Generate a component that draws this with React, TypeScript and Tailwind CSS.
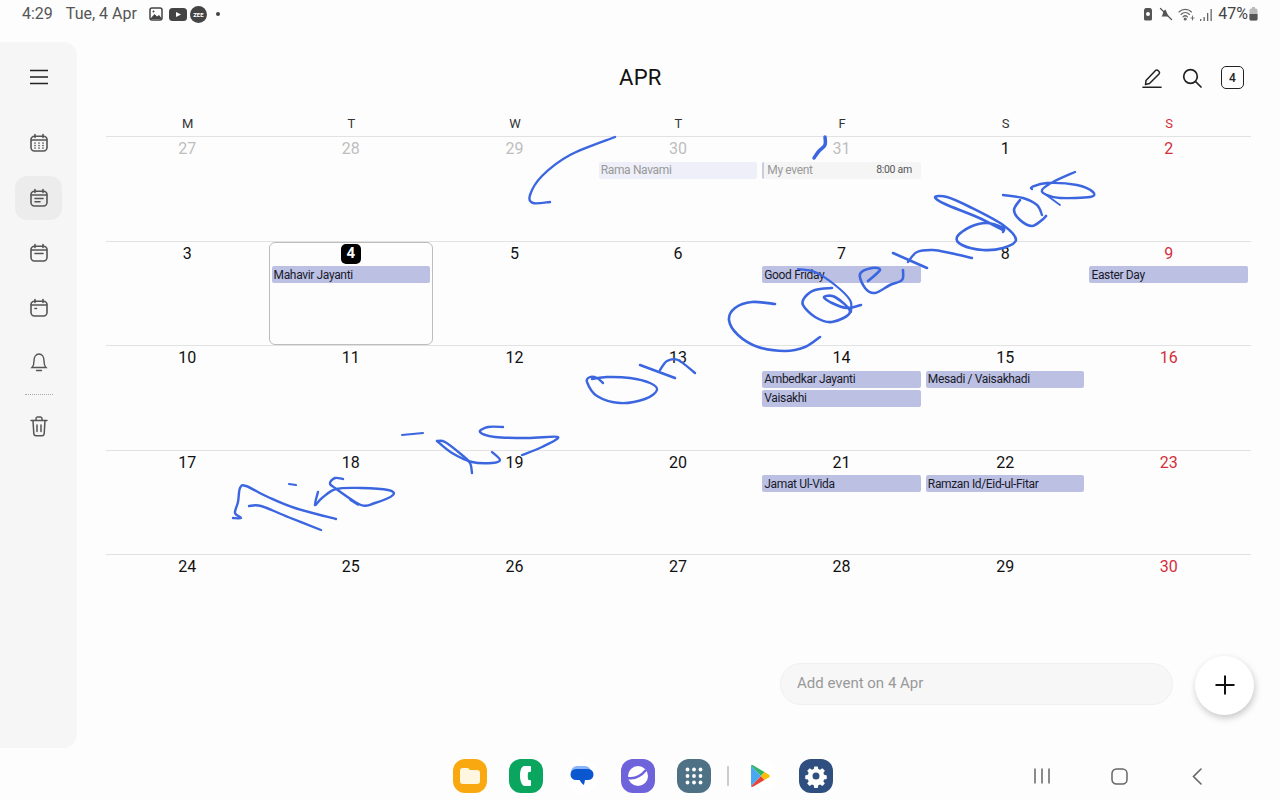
import React from 'react';

type Ev = { label: string; kind?: 'holiday' | 'pastHoliday' | 'pastEvent'; time?: string };
type Day = { n: number; muted?: boolean; today?: boolean; events?: Ev[] };

const h = (label: string): Ev => ({ label, kind: 'holiday' });

const weeks: Day[][] = [
  [
    { n: 27, muted: true },
    { n: 28, muted: true },
    { n: 29, muted: true },
    { n: 30, muted: true, events: [{ label: 'Rama Navami', kind: 'pastHoliday' }] },
    { n: 31, muted: true, events: [{ label: 'My event', kind: 'pastEvent', time: '8:00 am' }] },
    { n: 1 },
    { n: 2 },
  ],
  [
    { n: 3 },
    { n: 4, today: true, events: [h('Mahavir Jayanti')] },
    { n: 5 },
    { n: 6 },
    { n: 7, events: [h('Good Friday')] },
    { n: 8 },
    { n: 9, events: [h('Easter Day')] },
  ],
  [
    { n: 10 },
    { n: 11 },
    { n: 12 },
    { n: 13 },
    { n: 14, events: [h('Ambedkar Jayanti'), h('Vaisakhi')] },
    { n: 15, events: [h('Mesadi / Vaisakhadi')] },
    { n: 16 },
  ],
  [
    { n: 17 },
    { n: 18 },
    { n: 19 },
    { n: 20 },
    { n: 21, events: [h('Jamat Ul-Vida')] },
    { n: 22, events: [h('Ramzan Id/Eid-ul-Fitar')] },
    { n: 23 },
  ],
  [{ n: 24 }, { n: 25 }, { n: 26 }, { n: 27 }, { n: 28 }, { n: 29 }, { n: 30 }],
];

const weekdays = ['M', 'T', 'W', 'T', 'F', 'S', 'S'];

// pen strokes, in page coordinates
const strokes: { w: number; pts: number[][] }[] = [
  { w: 2.4, pts: [[615, 137], [570, 155], [542, 176], [530, 195], [533, 203], [550, 202]] },
  { w: 3.5, pts: [[825, 137], [825, 145], [819, 151], [814, 158]] },
  // This
  { w: 2.4, pts: [[233, 518], [241, 518], [235, 513], [238, 502], [240, 488], [246, 486], [268, 497], [295, 508], [336, 519]] },
  { w: 2.4, pts: [[249, 506], [261, 506], [288, 517], [321, 530]] },
  { w: 2.2, pts: [[289, 484], [296, 485]] },
  { w: 2.4, pts: [[318, 492], [315, 505], [322, 498], [336, 489], [361, 488], [388, 490], [393, 495], [375, 503], [361, 505], [335, 488], [330, 483], [335, 478], [343, 479]] },
  { w: 1.6, pts: [[350, 500], [358, 505]] },
  // is
  { w: 2, pts: [[402, 435], [423, 433]] },
  { w: 2.4, pts: [[437, 441], [445, 442], [462, 455], [470, 463], [472, 473]] },
  { w: 2.4, pts: [[437, 441], [452, 453], [472, 462], [492, 463], [500, 460], [492, 452]] },
  { w: 2.4, pts: [[503, 427], [488, 427], [480, 432], [495, 437], [528, 438], [558, 437], [542, 447], [522, 455]] },
  // on
  { w: 2.4, pts: [[603, 383], [597, 378], [590, 377], [587, 382], [597, 396], [620, 403], [645, 399], [657, 390], [650, 383], [630, 378], [607, 377], [592, 379]] },
  { w: 2.6, pts: [[640, 365], [675, 378]] },
  { w: 2.4, pts: [[660, 370], [667, 361], [678, 360], [695, 373]] },
  // Calendar
  { w: 2.6, pts: [[775, 304], [752, 302], [735, 308], [729, 320], [738, 335], [758, 347], [785, 351], [805, 347], [820, 337]] },
  { w: 2.6, pts: [[832, 288], [815, 290], [805, 297], [803, 305], [815, 317], [832, 322], [850, 312], [835, 297], [824, 297], [832, 303], [847, 308], [861, 305]] },
  { w: 2.2, pts: [[798, 269], [815, 272], [835, 285], [850, 300], [851, 312]] },
  { w: 2.6, pts: [[868, 281], [880, 270], [872, 268], [860, 274], [865, 288], [875, 293], [890, 285], [902, 280], [903, 270]] },
  { w: 2.6, pts: [[893, 253], [927, 268]] },
  { w: 2.4, pts: [[908, 262], [917, 252], [933, 250], [950, 253], [972, 258]] },
  { w: 2.6, pts: [[1003, 232], [1003, 228], [987, 223], [970, 227], [957, 237], [962, 245], [983, 250], [1003, 248], [1016, 240], [1003, 225], [970, 207], [947, 197], [935, 197], [945, 204], [977, 217], [1003, 230]] },
  { w: 2.4, pts: [[1003, 195], [1023, 198], [1037, 205], [1042, 215]] },
  { w: 2.6, pts: [[1020, 200], [1014, 210], [1020, 220], [1032, 226], [1042, 220], [1046, 216]] },
  { w: 2.4, pts: [[1075, 172], [1053, 182], [1042, 190], [1047, 195], [1060, 198], [1090, 197], [1093, 192], [1077, 185], [1047, 183], [1032, 187], [1032, 189]] },
  { w: 1.8, pts: [[1045, 194], [1060, 205]] },
];

// catmull-rom through the points, good enough for pen ink
const smooth = (pts: number[][]) => {
  let d = `M${pts[0][0]} ${pts[0][1]}`;
  for (let i = 0; i < pts.length - 1; i++) {
    const p0 = pts[i - 1] || pts[i];
    const p1 = pts[i];
    const p2 = pts[i + 1];
    const p3 = pts[i + 2] || p2;
    const c1x = p1[0] + (p2[0] - p0[0]) / 6;
    const c1y = p1[1] + (p2[1] - p0[1]) / 6;
    const c2x = p2[0] - (p3[0] - p1[0]) / 6;
    const c2y = p2[1] - (p3[1] - p1[1]) / 6;
    d += ` C${c1x} ${c1y} ${c2x} ${c2y} ${p2[0]} ${p2[1]}`;
  }
  return d;
};

const CalIcon: React.FC<{ children?: React.ReactNode }> = ({ children }) => (
  <svg width="20" height="20" viewBox="0 0 20 20" fill="none" stroke="#555" strokeWidth="1.6" strokeLinecap="round">
    <rect x="2" y="3.2" width="16" height="14.8" rx="3.4" />
    <path d="M2.5 7h15M6 1.5v3M14 1.5v3" />
    {children}
  </svg>
);

const EventBar: React.FC<{ ev: Ev }> = ({ ev }) => {
  if (ev.kind === 'pastEvent') {
    return (
      <div className="ml-[2px] mr-[3px] flex h-[17px] items-center rounded-[2px] border-l-[2px] border-[#c9cbe0] bg-[#f5f5f5] pl-[3px] pr-[9px] text-[12px] tracking-[-0.35px] text-[#999]">
        <span>{ev.label}</span>
        <span className="ml-auto tracking-[-0.3px] text-[10.5px] text-[#555]">{ev.time}</span>
      </div>
    );
  }
  const tone = ev.kind === 'pastHoliday' ? 'bg-[#eeeff8] text-[#999]' : 'bg-[#bcc1e4] text-[#1a1a2a]';
  return (
    <div className={`ml-[2px] mr-[3px] mb-[2px] flex h-[17px] items-center rounded-[2px] pl-[2px] text-[12px] tracking-[-0.35px] ${tone}`}>
      {ev.label}
    </div>
  );
};

const DayCell: React.FC<{ day: Day; col: number }> = ({ day, col }) => {
  const red = col === 6;
  const color = day.muted ? 'text-[#bdbdbd]' : red ? 'text-[#d32f3a]' : 'text-[#111]';
  return (
    <div className="relative h-full min-w-0">
      {day.today && <div className="absolute -left-[1px] right-0 top-0 bottom-0 rounded-[6px] border border-[#bdbdbd]" />}
      <div className="mt-[2px] flex h-[20px] items-center justify-center pr-[1px]">
        {day.today ? (
          <span className="flex h-[20px] w-[20px] items-center justify-center rounded-[5px] bg-black text-[15px] font-bold text-white">
            {day.n}
          </span>
        ) : (
          <span className={`text-[16px] ${color}`}>{day.n}</span>
        )}
      </div>
      <div className="relative mt-[2.5px]">
        {day.events?.map((ev) => <EventBar key={ev.label} ev={ev} />)}
      </div>
    </div>
  );
};

const StatusBar = () => (
  <div className="flex h-[42px] shrink-0 items-center pb-[14px] pl-[22px] pr-[22px] text-[16px] text-[#555]">
    <span>4:29</span>
    <span className="ml-[13px]">Tue, 4 Apr</span>
    <svg className="ml-[12px]" width="14" height="14" viewBox="0 0 14 14" fill="none" stroke="#444" strokeWidth="1.5">
      <rect x="1" y="1" width="12" height="12" rx="2" />
      <path d="M2 11l3.5-4 2.5 2.5L10 8l2 2.5V12H2z" fill="#444" stroke="none" />
      <circle cx="4.5" cy="4.5" r="1" fill="#444" stroke="none" />
    </svg>
    <svg className="ml-[6px]" width="18" height="13" viewBox="0 0 18 13">
      <rect width="18" height="13" rx="3.5" fill="#444" />
      <path d="M7 4l5 2.5L7 9z" fill="#fff" />
    </svg>
    <span className="ml-[3px] flex h-[17px] w-[17px] items-center justify-center rounded-full bg-[#444] text-[6px] font-bold text-white">ZEE</span>
    <span className="ml-[9px] h-[4px] w-[4px] rounded-full bg-[#444]" />
    <div className="ml-auto flex items-center gap-[5px]">
      <svg width="12" height="14" viewBox="0 0 12 14" fill="#555">
        <path d="M2 3.5C2 2 3 1 4 1h4c1 0 2 1 2 2.5V12a1.5 1.5 0 0 1-1.5 1.5h-5A1.5 1.5 0 0 1 2 12z" />
        <circle cx="6" cy="7" r="2" fill="#fff" />
      </svg>
      <svg width="14" height="14" viewBox="0 0 14 14" fill="#555" stroke="#555" strokeWidth="1.3" strokeLinecap="round">
        <path d="M1.5 1.5l11 11" />
        <path d="M6.5 2.5C4.5 3.5 4 5.5 3.5 8L2.5 9.5h7z" stroke="none" />
      </svg>
      <svg width="17" height="14" viewBox="0 0 17 14" fill="none" stroke="#666" strokeWidth="1.1" strokeLinecap="round">
        <path d="M1 5c3.500-3.500 9-3.500 12.500 0M3 7.500c2.500-2.500 6-2.500 8.500 0M5 9.800c1.300-1.300 3.200-1.300 4.500 0" />
        <circle cx="7.2" cy="12" r="1" fill="#666" />
        <path d="M14.5 9v4M13 11h3" strokeWidth="0.9" />
      </svg>
      <svg width="13" height="13" viewBox="0 0 13 13" fill="#666">
        <rect x="0" y="11" width="1.3" height="2" />
        <rect x="3.5" y="9" width="1.3" height="4" />
        <rect x="7" y="5" width="1.3" height="8" />
        <rect x="10.5" y="1" width="1.3" height="12" />
      </svg>
      <span className="text-[16px] leading-none text-[#444]">47%</span>
      <svg className="-ml-[4px]" width="9" height="14" viewBox="0 0 9 14">
        <rect x="0.5" y="1.5" width="8" height="12" rx="1.5" fill="#bbb" />
        <rect x="3" y="0" width="3" height="2" fill="#bbb" />
        <path d="M0.5 7h8v5a1.5 1.5 0 0 1-1.5 1.5H2A1.5 1.5 0 0 1 .5 12z" fill="#555" />
      </svg>
    </div>
  </div>
);

const Sidebar = () => (
  <aside className="flex w-[77px] shrink-0 flex-col items-center rounded-r-[14px] bg-[#f6f6f6] pt-[13px]">
    <div className="flex h-[44px] w-[47px] items-center justify-center">
      <svg width="18" height="16" viewBox="0 0 18 16" stroke="#222" strokeWidth="1.7">
        <path d="M0 1.500h18M0 8h18M0 14.500h18" />
      </svg>
    </div>
    <div className="mt-[22px] flex h-[44px] w-[47px] items-center justify-center">
      <CalIcon>
        <path d="M6 10h.01M10 10h.01M14 10h.01M6 12.500h.01M10 12.500h.01M14 12.500h.01M6 15h.01M10 15h.01M14 15h.01" strokeWidth="1.7" />
      </CalIcon>
    </div>
    <div className="mt-[11px] flex h-[44px] w-[47px] items-center justify-center rounded-[12px] bg-[#ececec]">
      <CalIcon>
        <path d="M6 10.500h8M6 13.800h5" />
      </CalIcon>
    </div>
    <div className="mt-[11px] flex h-[44px] w-[47px] items-center justify-center">
      <CalIcon>
        <path d="M6 10.500h8" />
      </CalIcon>
    </div>
    <div className="mt-[11px] flex h-[44px] w-[47px] items-center justify-center">
      <CalIcon>
        <path d="M6 10.500h1.500" />
      </CalIcon>
    </div>
    <div className="mt-[10px] flex h-[44px] w-[47px] items-center justify-center">
      <svg width="18" height="20" viewBox="0 0 18 20" fill="none" stroke="#555" strokeWidth="1.4" strokeLinecap="round">
        <path d="M2 15.500h14c-1.500-1.500-2-3-2-6.500 0-4-2-7-5-7S4 5 4 9c0 3.500-.5 5-2 6.500z" />
        <path d="M6.500 18.500h5" />
      </svg>
    </div>
    <div className="mt-[10px] w-[28px] border-t border-dotted border-[#aaa]" />
    <div className="mt-[9px] flex h-[44px] w-[47px] items-center justify-center">
      <svg width="18" height="21" viewBox="0 0 18 21" fill="none" stroke="#555" strokeWidth="1.5" strokeLinecap="round" strokeLinejoin="round">
        <path d="M1 4.500h16M6 4.500V2.800C6 1.800 6.800 1 7.500 1h3c.8 0 1.500.8 1.500 1.800v1.700" />
        <path d="M3 4.500l.8 13c.1 1.200 1 2.200 2.200 2.200h6c1.200 0 2.100-1 2.200-2.200l.8-13M7 9v6.500M11 9v6.500" />
      </svg>
    </div>
  </aside>
);

const Header = () => (
  <div className="flex h-[71px] shrink-0 items-center pl-[542px] pr-[36px]">
    <span className="text-[22px] font-normal leading-none tracking-[0.3px] text-[#111]">APR</span>
    <div className="ml-auto flex items-center">
      <svg width="20" height="20" viewBox="0 0 20 20" fill="none" stroke="#222" strokeWidth="1.5" strokeLinejoin="round">
        <path d="M4 12.500L13.500 2.500c.8-.8 1.800-.8 2.500 0l1 1c.7.7.7 1.700 0 2.500L7.500 15.500 3.500 16.500z" />
        <path d="M1 19.300h18" strokeLinecap="round" />
      </svg>
      <svg className="ml-[20px]" width="20" height="20" viewBox="0 0 20 20" fill="none" stroke="#222" strokeWidth="1.7" strokeLinecap="round">
        <circle cx="8.500" cy="8.500" r="6.800" />
        <path d="M13.500 13.500l5.500 5.500" />
      </svg>
      <div className="ml-[19px] flex h-[23px] w-[23px] items-center justify-center rounded-[5px] border-[1.5px] border-[#222] text-[12px] font-medium text-[#222]">4</div>
    </div>
  </div>
);

const CalendarGrid = () => (
  <div className="ml-[29px] mr-[29px] shrink-0">
    <div className="grid h-[23px] grid-cols-7 items-center pb-[2px] text-center text-[13px] text-[#333]">
      {weekdays.map((d, i) => (
        <span key={i} className={i === 6 ? 'text-[#d32f3a]' : ''}>{d}</span>
      ))}
    </div>
    {weeks.map((week, w) => (
      <div key={w} className={`grid grid-cols-7 border-t border-[#e2e2e2] ${w === 4 ? 'h-[100px]' : 'h-[104.5px]'}`}>
        {week.map((day, i) => <DayCell key={i} day={day} col={i} />)}
      </div>
    ))}
  </div>
);

const AddRow = () => (
  <div className="mt-[1px] flex h-[60px] shrink-0 items-center pl-[703px] pr-[26px]">
    <div className="mb-[3px] flex h-[42px] w-[393px] items-center rounded-full border border-[#f0f0f0] bg-[#f7f7f7] pl-[16px] text-[15px] text-[#999]">
      Add event on 4 Apr
    </div>
    <div className="ml-auto flex h-[59px] w-[59px] items-center justify-center rounded-full bg-white shadow-[1px_3px_7px_rgba(0,0,0,0.22)]">
      <svg width="20" height="20" viewBox="0 0 20 20" stroke="#111" strokeWidth="2">
        <path d="M10 0.500v19M0.500 10h19" />
      </svg>
    </div>
  </div>
);

const Dock = () => (
  <div className="flex h-[52px] shrink-0 items-center pl-[453px] pt-[4px]">
    <div className="flex h-[34px] w-[34px] items-center justify-center rounded-[12px] bg-[#f9a80f]">
      <svg width="22" height="18" viewBox="0 0 22 18">
        <path d="M1 4a3 3 0 0 1 3-3h5l2 2h7a3 3 0 0 1 3 3v8a3 3 0 0 1-3 3H4a3 3 0 0 1-3-3z" fill="#fff6e0" />
      </svg>
    </div>
    <div className="ml-[22px] flex h-[34px] w-[34px] items-center justify-center rounded-[12px] bg-[#0aa65f]">
      <svg width="14" height="22" viewBox="0 0 14 22">
        <path d="M5 1h6a1 1 0 0 1 1 1v4a1 1 0 0 1-1 1H9.500C8.500 9 8.500 13 9.500 15H11a1 1 0 0 1 1 1v4a1 1 0 0 1-1 1H6C3 21 1 16 1 11S2 2 5 1z" fill="#fff" />
      </svg>
    </div>
    <div className="ml-[22px] flex h-[34px] w-[34px] items-center justify-center rounded-full bg-white">
      <svg width="26" height="24" viewBox="0 0 26 24">
        <rect x="2" y="2" width="20" height="12" rx="6" fill="#8ab4f8" />
        <path d="M7 5h12a5.500 5.500 0 0 1 0 11h-3l-1 5c-2-1-3.500-3.500-4.500-5H7a5.500 5.500 0 0 1 0-11z" fill="#0b57d0" />
      </svg>
    </div>
    <div className="ml-[22px] flex h-[34px] w-[34px] items-center justify-center rounded-[12px] bg-[#6f63dc]">
      <svg width="26" height="26" viewBox="0 0 26 26" fill="none">
        <circle cx="13" cy="13" r="10" fill="#fff" />
        <path d="M3 15c6 1 13-2 18-8" stroke="#6f63dc" strokeWidth="2.500" />
      </svg>
    </div>
    <div className="ml-[22px] flex h-[34px] w-[34px] items-center justify-center rounded-[12px] bg-[#4f7186]">
      <svg width="18" height="18" viewBox="0 0 18 18" fill="#fff">
        {[2.5, 9, 15.5].flatMap((y) => [2.5, 9, 15.5].map((x) => <circle key={`${x}-${y}`} cx={x} cy={y} r="1.9" />))}
      </svg>
    </div>
    <div className="ml-[16px] h-[20px] w-[2px] bg-[#ccc]" />
    <div className="ml-[14px] flex h-[34px] w-[34px] items-center justify-center rounded-full bg-white">
      <svg width="20" height="24" viewBox="0 0 20 24">
        <path d="M1 1.500v21L11 12z" fill="#4aa8f0" />
        <path d="M1 1.500c.5-.6 1.500-.6 2.500 0L14.500 8 11 12z" fill="#34b36b" />
        <path d="M1 22.500c.5.6 1.500.6 2.500 0L14.500 16 11 12z" fill="#ea4335" />
        <path d="M14.500 8l4.500 2.700c1 .7 1 1.900 0 2.600L14.500 16 11 12z" fill="#fbbc04" />
      </svg>
    </div>
    <div className="ml-[22px] flex h-[34px] w-[34px] items-center justify-center rounded-[12px] bg-[#2f4f80]">
      <svg width="24" height="24" viewBox="0 0 24 24">
        <path fill="#fff" fillRule="evenodd" d="M10 1h4l.6 3 2.100.9 2.600-1.700 2.800 2.800-1.700 2.600.9 2.100 3 .6v4l-3 .6-.9 2.100 1.700 2.600-2.800 2.800-2.600-1.700-2.100.9-.6 3h-4l-.6-3-2.100-.9-2.600 1.700-2.800-2.800 1.700-2.600-.9-2.100-3-.6v-4l3-.6.9-2.100L2 6l2.800-2.800 2.600 1.700 2.100-.9zM12 8a4 4 0 1 0 0 8 4 4 0 0 0 0-8z" transform="translate(1.500 1.500) scale(.875)" />
      </svg>
    </div>
    <svg className="ml-[200px]" width="18" height="16" viewBox="0 0 18 16" stroke="#666" strokeWidth="1.5">
      <path d="M2 0.500v15M9 0.500v15M16 0.500v15" />
    </svg>
    <svg className="ml-[60px]" width="17" height="17" viewBox="0 0 17 17" fill="none" stroke="#666" strokeWidth="1.5">
      <rect x="1" y="1" width="15" height="15" rx="4.500" />
    </svg>
    <svg className="ml-[64px]" width="10" height="17" viewBox="0 0 10 17" fill="none" stroke="#666" strokeWidth="1.6" strokeLinecap="round">
      <path d="M9 1L1.500 8.500 9 16" />
    </svg>
  </div>
);

export default function App() {
  return (
    <div className="relative flex h-[800px] w-[1280px] flex-col overflow-hidden bg-[#fdfdfd] font-['Roboto',sans-serif]">
      <StatusBar />
      <div className="flex h-[706px] shrink-0">
        <Sidebar />
        <main className="flex min-w-0 flex-1 flex-col">
          <Header />
          <CalendarGrid />
          <AddRow />
        </main>
      </div>
      <Dock />
      {/* handwriting lies on top of the whole calendar */}
      <svg className="pointer-events-none absolute inset-0" width="1280" height="800" fill="none" stroke="#3b66e0" strokeLinecap="round" strokeLinejoin="round">
        {strokes.map((s, i) => <path key={i} d={smooth(s.pts)} strokeWidth={s.w} />)}
      </svg>
    </div>
  );
}
